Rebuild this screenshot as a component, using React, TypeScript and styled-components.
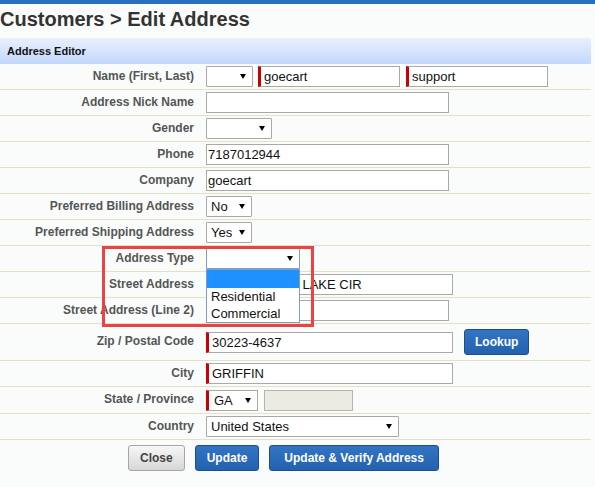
import React from 'react';
import styled, { createGlobalStyle } from 'styled-components';

const Global = createGlobalStyle`
  html, body { margin: 0; padding: 0; background: #fafcfc; }
  body { font-family: "Liberation Sans", Arial, sans-serif; }
  * { box-sizing: border-box; }
`;

const TopBar = styled.div`
  height: 4px;
  background: #276fbf;
`;

const Page = styled.div`
  width: 591px;
`;

const Title = styled.h1`
  margin: 3px 0 7px;
  font-size: 20px;
  line-height: 24px;
  font-weight: bold;
  color: #333;
`;

const SectionHeader = styled.div`
  height: 26px;
  line-height: 26px;
  padding-left: 7px;
  font-size: 11px;
  font-weight: bold;
  color: #111;
  background: linear-gradient(#e9f0fe, #c3d7fb);
`;

const Row = styled.div<{ $h?: number }>`
  position: relative;
  display: grid;
  grid-template-columns: 194px 1fr;
  column-gap: 12px;
  align-items: center;
  height: ${(p) => p.$h ?? 26}px;
  border-bottom: 1px solid #e6dfc4;
`;

const Label = styled.div`
  text-align: right;
  padding-bottom: 2px;
  font-size: 12px;
  font-weight: bold;
  color: #555;
  white-space: nowrap;
`;

const Controls = styled.div<{ $gap?: number }>`
  display: flex;
  align-items: center;
  gap: ${(p) => p.$gap ?? 6}px;
`;

const TextInput = styled.input<{ $w: number; $req?: boolean; $disabledLook?: boolean }>`
  width: ${(p) => p.$w}px;
  height: 21px;
  margin: 0;
  border: 1px solid ${(p) => (p.$disabledLook ? '#b4b4b4' : '#a9a9a9')};
  border-left: ${(p) => (p.$req ? '3px solid #cc0000' : `1px solid ${p.$disabledLook ? '#b4b4b4' : '#a9a9a9'}`)};
  border-radius: 0;
  padding: 0 0 0 ${(p) => (p.$req ? 3 : 1)}px;
  background: ${(p) => (p.$disabledLook ? '#ebebe4' : '#fff')};
  font-family: "Liberation Sans", Arial, sans-serif;
  font-size: 13px;
  color: #111;
  outline: none;
`;

const SelectBox = styled.div<{ $w: number; $req?: boolean; $focus?: boolean }>`
  width: ${(p) => p.$w}px;
  height: 21px;
  display: flex;
  align-items: center;
  justify-content: space-between;
  padding: 0 6px 0 ${(p) => (p.$req ? 5 : 4)}px;
  border: 1px solid ${(p) => (p.$focus ? '#7b9dd4' : '#a9a9a9')};
  border-left: ${(p) => (p.$req ? '3px solid #cc0000' : `1px solid ${p.$focus ? '#7b9dd4' : '#a9a9a9'}`)};
  border-radius: 1px;
  background: #fff;
  font-size: 13px;
  color: #111;
  white-space: nowrap;
`;

const Arrow = styled.span`
  flex: none;
  width: 0;
  height: 0;
  border-left: 3px solid transparent;
  border-right: 3px solid transparent;
  border-top: 5px solid #000;
`;

const DropList = styled.ul`
  position: absolute;
  left: 206px;
  top: 23px;
  width: 94px;
  margin: 0;
  padding: 0;
  list-style: none;
  background: #fff;
  border: 1px solid #7f9db9;
  z-index: 5;
`;

const DropItem = styled.li<{ $active?: boolean }>`
  height: ${(p) => (p.$active ? 18 : 17)}px;
  line-height: 17px;
  padding-left: 4px;
  font-size: 13px;
  color: #111;
  background: ${(p) => (p.$active ? '#1e90ff' : 'transparent')};
`;

const Highlight = styled.div`
  position: absolute;
  left: 102px;
  top: 0;
  width: 212px;
  height: 81px;
  border: 3px solid #e84444;
  z-index: 6;
  pointer-events: none;
`;

const ButtonBar = styled.div`
  display: flex;
  gap: 10px;
  padding: 5px 0 0 128px;
`;

const Button = styled.button<{ $primary?: boolean; $pad?: number }>`
  height: 26px;
  padding: 0 ${(p) => p.$pad ?? 11}px;
  margin: 0;
  border-radius: 3px;
  font-family: "Liberation Sans", Arial, sans-serif;
  font-size: 12px;
  font-weight: bold;
  cursor: pointer;
  color: ${(p) => (p.$primary ? '#fff' : '#444')};
  background: ${(p) =>
    p.$primary ? 'linear-gradient(#3274c4, #2362ae)' : 'linear-gradient(#f7f7f7, #d6d6d6)'};
  border: 1px solid ${(p) => (p.$primary ? '#1d4d8a' : '#a6a6a6')};
`;

const Select = ({ w, value, req, focus }: { w: number; value?: string; req?: boolean; focus?: boolean }) => (
  <SelectBox $w={w} $req={req} $focus={focus}>
    <span>{value ?? ''}</span>
    <Arrow />
  </SelectBox>
);

export default function App() {
  return (
    <>
      <Global />
      <TopBar />
      <Page>
        <Title>Customers &gt; Edit Address</Title>
        <SectionHeader>Address Editor</SectionHeader>

        <Row>
          <Label>Name (First, Last)</Label>
          <Controls $gap={5}>
            <Select w={47} />
            <TextInput $w={142} $req defaultValue="goecart" />
            <TextInput $w={142} $req defaultValue="support" style={{ marginLeft: 1 }} />
          </Controls>
        </Row>
        <Row>
          <Label>Address Nick Name</Label>
          <Controls>
            <TextInput $w={243} defaultValue="" />
          </Controls>
        </Row>
        <Row>
          <Label>Gender</Label>
          <Controls>
            <Select w={66} />
          </Controls>
        </Row>
        <Row>
          <Label>Phone</Label>
          <Controls>
            <TextInput $w={243} defaultValue="7187012944" />
          </Controls>
        </Row>
        <Row>
          <Label>Company</Label>
          <Controls>
            <TextInput $w={243} defaultValue="goecart" />
          </Controls>
        </Row>
        <Row>
          <Label>Preferred Billing Address</Label>
          <Controls>
            <Select w={46} value="No" />
          </Controls>
        </Row>
        <Row>
          <Label>Preferred Shipping Address</Label>
          <Controls>
            <Select w={46} value="Yes" />
          </Controls>
        </Row>
        <Row>
          <Label>Address Type</Label>
          <Controls>
            <Select w={94} focus />
          </Controls>
          <DropList>
            <DropItem $active>&nbsp;</DropItem>
            <DropItem>Residential</DropItem>
            <DropItem>Commercial</DropItem>
          </DropList>
          <Highlight />
        </Row>
        <Row>
          <Label>Street Address</Label>
          <Controls>
            <TextInput $w={247} defaultValue="4410 CRYSTAL LAKE CIR" />
          </Controls>
        </Row>
        <Row>
          <Label>Street Address (Line 2)</Label>
          <Controls>
            <TextInput $w={243} defaultValue="" />
          </Controls>
        </Row>
        <Row $h={37}>
          <Label>Zip / Postal Code</Label>
          <Controls $gap={11}>
            <TextInput $w={247} $req defaultValue="30223-4637" />
            <Button $primary $pad={10}>Lookup</Button>
          </Controls>
        </Row>
        <Row>
          <Label>City</Label>
          <Controls>
            <TextInput $w={247} $req defaultValue="GRIFFIN" />
          </Controls>
        </Row>
        <Row $h={27}>
          <Label>State / Province</Label>
          <Controls>
            <Select w={52} value="GA" req />
            <TextInput $w={89} $disabledLook readOnly defaultValue="" />
          </Controls>
        </Row>
        <Row>
          <Label>Country</Label>
          <Controls>
            <Select w={193} value="United States" />
          </Controls>
        </Row>

        <ButtonBar>
          <Button>Close</Button>
          <Button $primary>Update</Button>
          <Button $primary $pad={14}>Update &amp; Verify Address</Button>
        </ButtonBar>
      </Page>
    </>
  );
}
